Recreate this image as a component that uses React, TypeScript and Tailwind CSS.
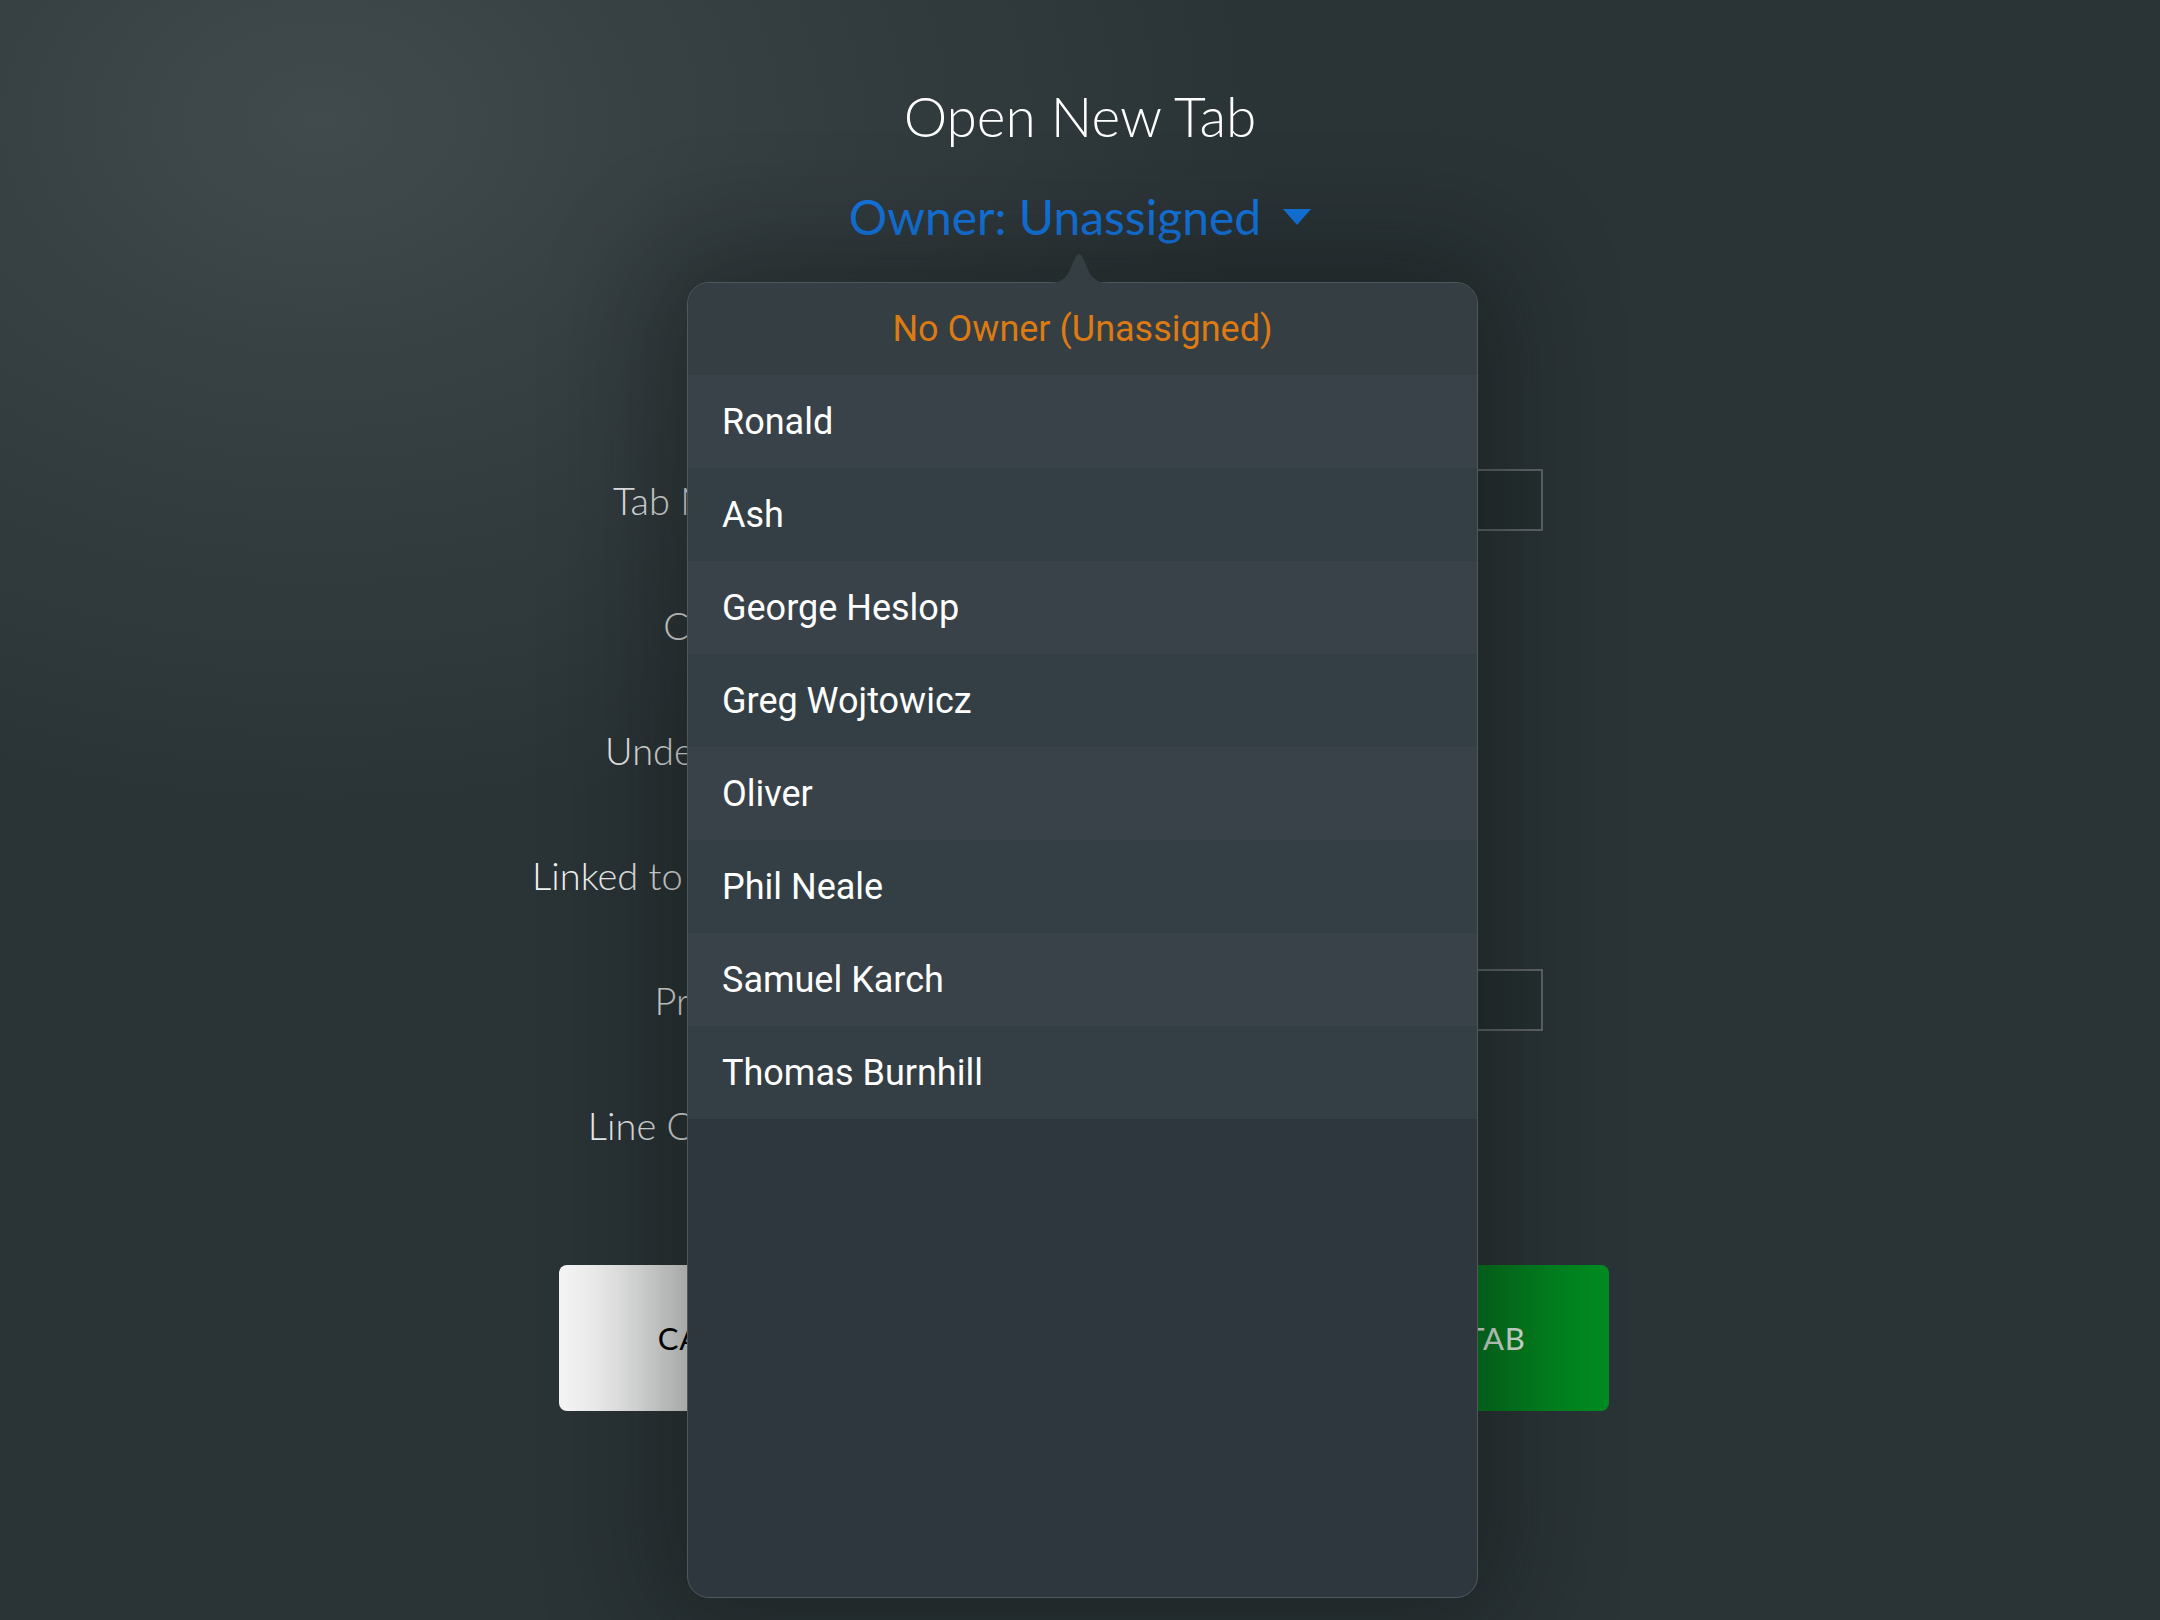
const owners = [
  "Ronald",
  "Ash",
  "George Heslop",
  "Greg Wojtowicz",
  "Oliver",
  "Phil Neale",
  "Samuel Karch",
  "Thomas Burnhill",
];

const fields = [
  { label: "Tab Name", input: true },
  { label: "Covers", input: false },
  { label: "Under 18s", input: false },
  { label: "Linked to Table", input: false },
  { label: "Prepaid", input: true },
  { label: "Line Colour", input: false },
];

function OwnerPopover() {
  return (
    <div className="absolute left-[687px] top-[282px] w-[791px] h-[1316px] rounded-[22px] shadow-[0_0_110px_30px_rgba(15,20,20,0.45)]">
      <svg
        className="absolute left-[362px] top-[-29px]"
        width="60"
        height="30"
        viewBox="0 0 60 30"
      >
        <path
          d="M0 30 C10 30 14 27 19 21 L27 3 Q30 -1 33 3 L41 21 C46 27 50 30 60 30 Z"
          fill="#343e43"
        />
      </svg>
      <div className="h-full w-full overflow-hidden rounded-[22px] border border-[#4f585c] bg-[#2d373d]">
        <div className="flex h-[92px] items-center justify-center bg-[#343e43] text-[36px] text-[#dd7a12] font-['Roboto',sans-serif]">
          No Owner (Unassigned)
        </div>
        {owners.map((name, i) => (
          <div
            key={name}
            className={
              i % 2 === 0
                ? "flex h-[93px] items-center bg-[#3a4249] pl-[34px] text-[36px] text-white font-['Roboto',sans-serif]"
                : "flex h-[93px] items-center bg-[#343f45] pl-[34px] text-[36px] text-white font-['Roboto',sans-serif]"
            }
          >
            {name}
          </div>
        ))}
      </div>
    </div>
  );
}

export default function App() {
  return (
    <div className="relative h-[1620px] w-[2160px] overflow-hidden bg-[#2a3336] font-['Lato',sans-serif]">
      <div className="flex h-full w-full flex-col items-center bg-[radial-gradient(ellipse_950px_700px_at_320px_120px,#414a4c_0%,#363f42_40%,rgba(43,51,54,0)_100%)] pt-[89px]">
        <h1 className="text-[55px] font-light leading-none text-white">
          Open New Tab
        </h1>
        <button className="mt-[49px] flex items-center gap-[22px] text-[48px] leading-none text-[#1378e6]">
          Owner: Unassigned
          <svg width="28" height="16" viewBox="0 0 28 16">
            <path d="M0 0 H28 L14 16 Z" fill="#1378e6" />
          </svg>
        </button>

        <div className="mt-[196px] w-[1058px] pl-[8px]">
          <div className="grid grid-cols-[218px_733px] gap-x-[33px]">
            {fields.map((f) => (
              <div key={f.label} className="contents">
                <div className="flex h-[125px] items-center justify-end whitespace-nowrap text-[38px] font-light leading-none text-[#f2f3f3]">
                  {f.label}
                </div>
                <div className="flex h-[125px] items-center">
                  {f.input && (
                    <div className="h-[62px] w-full border-2 border-[#62686a] bg-gradient-to-r from-[#1f2728] to-[#263031]" />
                  )}
                </div>
              </div>
            ))}
          </div>

          <div className="mt-[78px] flex justify-between">
            <button className="flex h-[146px] w-[322px] items-center justify-center rounded-[8px] bg-gradient-to-r from-[#f7f7f7] to-[#e4e4e3] text-[31px] tracking-wide text-black">
              CANCEL
            </button>
            <button className="flex h-[146px] w-[322px] items-center justify-center rounded-[8px] bg-gradient-to-r from-[#006d14] to-[#008d22] text-[31px] tracking-wide text-[#e8f5e8]">
              OPEN TAB
            </button>
          </div>
        </div>
      </div>

      <OwnerPopover />
    </div>
  );
}
